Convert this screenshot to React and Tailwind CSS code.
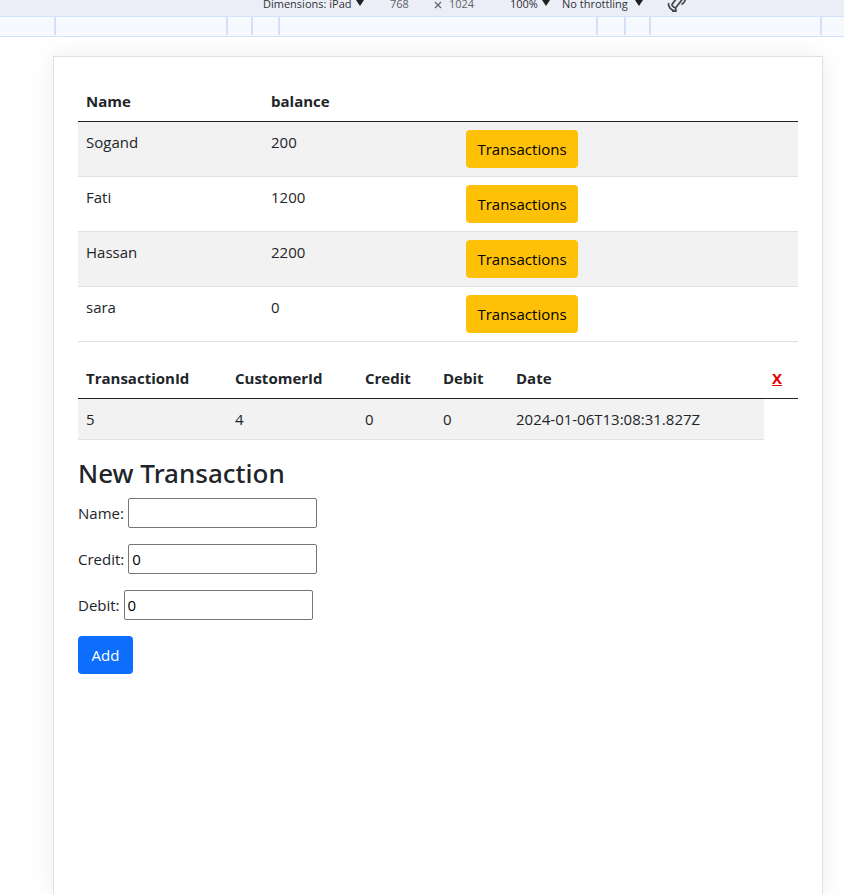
import { useId } from "react";

const customers = [
  { name: "Sogand", balance: 200 },
  { name: "Fati", balance: 1200 },
  { name: "Hassan", balance: 2200 },
  { name: "sara", balance: 0 },
];

const transactions = [
  { id: 5, customerId: 4, credit: 0, debit: 0, date: "2024-01-06T13:08:31.827Z" },
];

function Caret() {
  return (
    <svg className="h-2 w-2 shrink-0" viewBox="0 0 8 8" fill="#1f1f1f" aria-hidden="true">
      <path d="M0 0h8L4 6z" />
    </svg>
  );
}

function ToolSelect({ label, value, width }) {
  return (
    <div className="flex items-center gap-1">
      <select
        aria-label={label}
        className={`appearance-none bg-transparent text-[#303236] outline-none ${width}`}
      >
        <option>{value}</option>
      </select>
      <Caret />
    </div>
  );
}

function RotateIcon() {
  return (
    <svg width="20" height="20" viewBox="0 0 20 20" fill="none" stroke="#45484d" strokeWidth="1.7" aria-hidden="true">
      <path d="M1.500 11c-.5 4 2.500 7.500 7.500 8" />
      <path d="M8.500 15.500l.5 3.500-4 .5" />
      <rect x="7.500" y="4" width="5" height="12" rx="2" transform="rotate(38 10 10)" />
      <path d="M14.500 12.500c2-1 3.500-3 4-5.500" />
    </svg>
  );
}

function DeviceToolbar() {
  return (
    <div className="flex h-[17px] items-end overflow-hidden border-b border-[#d3e3fd] bg-[#ebeef6] pb-1 pl-[263px] text-[11px] leading-4">
      <ToolSelect label="Dimensions" value="Dimensions: iPad" width="w-[89px]" />
      <input aria-label="Width" defaultValue="768" className="ml-[26px] w-11 bg-transparent text-[#5f6368] outline-none" />
      <svg className="h-3 w-2 shrink-0" viewBox="0 0 8 12" stroke="#5f6368" strokeWidth="1.2" aria-hidden="true">
        <path d="M1 2l6 6M7 2l-6 6" />
      </svg>
      <input aria-label="Height" defaultValue="1024" className="ml-[7px] w-[61px] bg-transparent text-[#5f6368] outline-none" />
      <ToolSelect label="Zoom" value="100%" width="w-7" />
      <div className="w-3" />
      <ToolSelect label="Throttling" value="No throttling" width="w-[69px]" />
      <button type="button" aria-label="Rotate" className="-mb-1 ml-6 pb-1">
        <RotateIcon />
      </button>
    </div>
  );
}

function Ruler() {
  const mark = "h-[18px] shrink-0 border-r-2 border-[#d3e0f8]";
  return (
    <div className="flex h-5 shrink-0 border-b border-[#d3e3fd] bg-[#f6f9fe]">
      <div className={`${mark} w-14`} />
      <div className={`${mark} w-[172px]`} />
      <div className={`${mark} w-[25px]`} />
      <div className={`${mark} w-[27px]`} />
      <div className={`${mark} w-[318px]`} />
      <div className={`${mark} w-7`} />
      <div className={`${mark} w-[25px]`} />
      <div className={`${mark} w-[171px]`} />
    </div>
  );
}

function CustomerTable() {
  return (
    <table className="mb-4 w-full table-fixed border-collapse text-left">
      <colgroup>
        <col className="w-[185px]" />
        <col className="w-[195px]" />
        <col />
      </colgroup>
      <thead>
        <tr className="border-b border-[#212529]">
          <th className="p-2 font-bold">Name</th>
          <th className="p-2 font-bold">balance</th>
          <th />
        </tr>
      </thead>
      <tbody>
        {customers.map((c) => (
          <tr key={c.name} className="border-b border-[#dee2e6] align-top odd:bg-[#f2f2f2]">
            <td className="p-2">{c.name}</td>
            <td className="p-2">{c.balance}</td>
            <td className="p-2">
              <button type="button" className="block h-[38px] w-28 rounded bg-[#ffc107] text-center text-black">
                Transactions
              </button>
            </td>
          </tr>
        ))}
      </tbody>
    </table>
  );
}

function TransactionTable() {
  const cell = "border-b border-[#dee2e6] bg-[#f2f2f2] p-2";
  return (
    <table className="mb-4 w-full table-fixed border-collapse text-left">
      <colgroup>
        <col className="w-[149px]" />
        <col className="w-[130px]" />
        <col className="w-[78px]" />
        <col className="w-[73px]" />
        <col />
        <col className="w-[34px]" />
      </colgroup>
      <thead>
        <tr className="border-b border-[#212529]">
          <th className="p-2 font-bold">TransactionId</th>
          <th className="p-2 font-bold">CustomerId</th>
          <th className="p-2 font-bold">Credit</th>
          <th className="p-2 font-bold">Debit</th>
          <th className="p-2 font-bold">Date</th>
          <th className="p-2 font-bold">
            <a href="#close" className="text-[#e60000] underline">X</a>
          </th>
        </tr>
      </thead>
      <tbody>
        {transactions.map((t) => (
          <tr key={t.id}>
            <td className={cell}>{t.id}</td>
            <td className={cell}>{t.customerId}</td>
            <td className={cell}>{t.credit}</td>
            <td className={cell}>{t.debit}</td>
            <td className={cell}>{t.date}</td>
          </tr>
        ))}
      </tbody>
    </table>
  );
}

function Field({ label, value }) {
  const id = useId();
  return (
    <div className="mb-4 flex items-center gap-1">
      <label htmlFor={id}>{label}</label>
      <input
        id={id}
        defaultValue={value}
        className="h-[30px] w-[189px] rounded-[2px] border border-[#767676] bg-white px-[3px] text-black"
      />
    </div>
  );
}

export default function App() {
  return (
    <div className="flex h-screen flex-col overflow-hidden bg-white font-['Open_Sans','Noto_Sans',sans-serif] text-[#212529]">
      <DeviceToolbar />
      <Ruler />
      <main className="mt-[19px] mr-[21px] ml-[53px] flex-1 border border-b-0 border-[#dfdfdf] p-6 text-[15px] leading-6 shadow-[0_0_24px_rgba(0,0,0,0.08)]">
        <CustomerTable />
        <TransactionTable />
        <h2 className="mb-2 font-['Noto_Sans','Open_Sans',sans-serif] text-[26px] leading-[34px] font-medium">New Transaction</h2>
        <form onSubmit={(e) => e.preventDefault()}>
          <Field label="Name:" value="" />
          <Field label="Credit:" value="0" />
          <Field label="Debit:" value="0" />
          <button type="submit" className="h-[38px] w-[55px] rounded bg-[#0d6efd] text-white">
            Add
          </button>
        </form>
      </main>
    </div>
  );
}
